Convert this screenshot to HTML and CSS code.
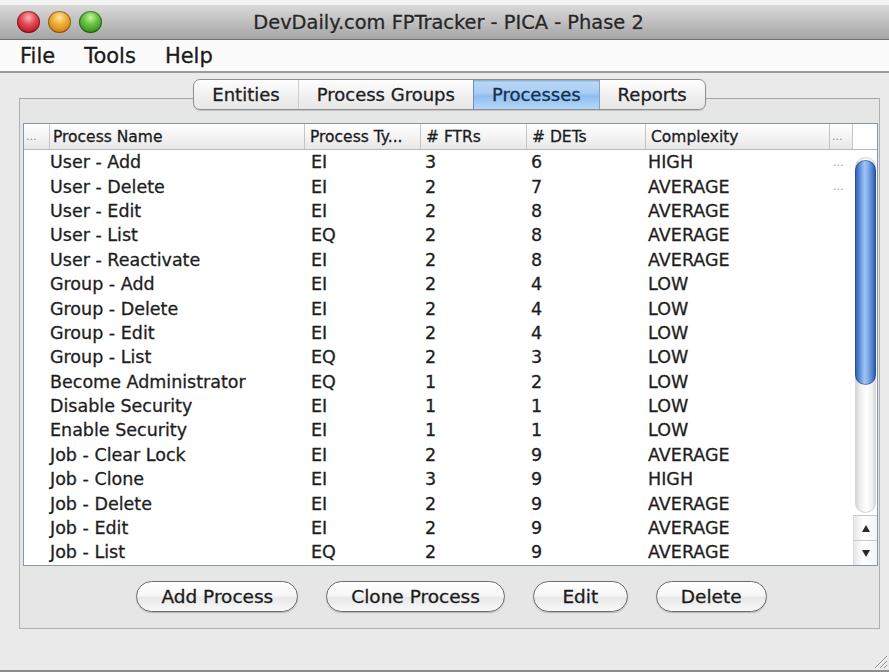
FILE: index.html
```html
<!DOCTYPE html>
<html lang="en">
<head>
<meta charset="utf-8">
<title>DevDaily.com FPTracker - PICA - Phase 2</title>
<link rel="stylesheet" href="styles.css">
</head>
<body>
<div class="window">
  <header class="titlebar">
    <div class="lights">
      <span class="light red"></span>
      <span class="light amber"></span>
      <span class="light green"></span>
    </div>
    <div class="title">DevDaily.com FPTracker - PICA - Phase 2</div>
  </header>

  <nav class="menubar">
    <span class="menu">File</span>
    <span class="menu">Tools</span>
    <span class="menu">Help</span>
  </nav>

  <main class="content">
    <div class="tabpane">
      <div class="tabs">
        <span class="tab">Entities</span>
        <span class="tab">Process Groups</span>
        <span class="tab active">Processes</span>
        <span class="tab">Reports</span>
      </div>

      <section class="panel">
        <div class="table">
          <div class="thead">
            <div class="th dots">...</div>
            <div class="th name">Process Name</div>
            <div class="th">Process Ty...</div>
            <div class="th"># FTRs</div>
            <div class="th"># DETs</div>
            <div class="th">Complexity</div>
            <div class="th dots">...</div>
            <div class="th corner"></div>
          </div>
          <div class="tbody">
            <div class="rows">
              <div class="row"><span></span><span class="c-name">User - Add</span><span class="c-type">EI</span><span class="c-num">3</span><span class="c-num">6</span><span class="c-cx">HIGH</span><span class="c-more">...</span></div>
              <div class="row"><span></span><span class="c-name">User - Delete</span><span class="c-type">EI</span><span class="c-num">2</span><span class="c-num">7</span><span class="c-cx">AVERAGE</span><span class="c-more">...</span></div>
              <div class="row"><span></span><span class="c-name">User - Edit</span><span class="c-type">EI</span><span class="c-num">2</span><span class="c-num">8</span><span class="c-cx">AVERAGE</span><span></span></div>
              <div class="row"><span></span><span class="c-name">User - List</span><span class="c-type">EQ</span><span class="c-num">2</span><span class="c-num">8</span><span class="c-cx">AVERAGE</span><span></span></div>
              <div class="row"><span></span><span class="c-name">User - Reactivate</span><span class="c-type">EI</span><span class="c-num">2</span><span class="c-num">8</span><span class="c-cx">AVERAGE</span><span></span></div>
              <div class="row"><span></span><span class="c-name">Group - Add</span><span class="c-type">EI</span><span class="c-num">2</span><span class="c-num">4</span><span class="c-cx">LOW</span><span></span></div>
              <div class="row"><span></span><span class="c-name">Group - Delete</span><span class="c-type">EI</span><span class="c-num">2</span><span class="c-num">4</span><span class="c-cx">LOW</span><span></span></div>
              <div class="row"><span></span><span class="c-name">Group - Edit</span><span class="c-type">EI</span><span class="c-num">2</span><span class="c-num">4</span><span class="c-cx">LOW</span><span></span></div>
              <div class="row"><span></span><span class="c-name">Group - List</span><span class="c-type">EQ</span><span class="c-num">2</span><span class="c-num">3</span><span class="c-cx">LOW</span><span></span></div>
              <div class="row"><span></span><span class="c-name">Become Administrator</span><span class="c-type">EQ</span><span class="c-num">1</span><span class="c-num">2</span><span class="c-cx">LOW</span><span></span></div>
              <div class="row"><span></span><span class="c-name">Disable Security</span><span class="c-type">EI</span><span class="c-num">1</span><span class="c-num">1</span><span class="c-cx">LOW</span><span></span></div>
              <div class="row"><span></span><span class="c-name">Enable Security</span><span class="c-type">EI</span><span class="c-num">1</span><span class="c-num">1</span><span class="c-cx">LOW</span><span></span></div>
              <div class="row"><span></span><span class="c-name">Job - Clear Lock</span><span class="c-type">EI</span><span class="c-num">2</span><span class="c-num">9</span><span class="c-cx">AVERAGE</span><span></span></div>
              <div class="row"><span></span><span class="c-name">Job - Clone</span><span class="c-type">EI</span><span class="c-num">3</span><span class="c-num">9</span><span class="c-cx">HIGH</span><span></span></div>
              <div class="row"><span></span><span class="c-name">Job - Delete</span><span class="c-type">EI</span><span class="c-num">2</span><span class="c-num">9</span><span class="c-cx">AVERAGE</span><span></span></div>
              <div class="row"><span></span><span class="c-name">Job - Edit</span><span class="c-type">EI</span><span class="c-num">2</span><span class="c-num">9</span><span class="c-cx">AVERAGE</span><span></span></div>
              <div class="row"><span></span><span class="c-name">Job - List</span><span class="c-type">EQ</span><span class="c-num">2</span><span class="c-num">9</span><span class="c-cx">AVERAGE</span><span></span></div>
            </div>
            <div class="scrollbar">
              <div class="track"><div class="thumb"></div></div>
              <div class="arrow up"><i></i></div>
              <div class="arrow down"><i></i></div>
            </div>
          </div>
        </div>

        <div class="buttons">
          <button class="btn">Add Process</button>
          <button class="btn">Clone Process</button>
          <button class="btn">Edit</button>
          <button class="btn">Delete</button>
        </div>
      </section>
    </div>
  </main>

  <svg class="grip" width="18" height="18" viewBox="0 0 18 18">
    <path d="M17 5 L5 17 M17 10 L10 17 M17 14 L14 17" stroke="#8c8c8c" stroke-width="1" fill="none"/>
    <path d="M17 6 L6 17 M17 11 L11 17 M17 15 L15 17" stroke="#fafafa" stroke-width="1" fill="none"/>
  </svg>
</div>
</body>
</html>
```

FILE: styles.css
```css
* { box-sizing: border-box; }

html, body {
  margin: 0;
  padding: 0;
  background: #f4f4f4;
}

body {
  font-family: "DejaVu Sans", "Noto Sans", sans-serif;
  color: #1f1f1f;
  -webkit-text-stroke: 0.3px currentColor;
}

.window {
  position: relative;
  width: 889px;
  height: 672px;
  display: flex;
  flex-direction: column;
  background: #e9e9e9;
  border-bottom: 2px solid #8d8d8d;
  overflow: hidden;
}

/* ---- title bar ---- */
.titlebar {
  position: relative;
  height: 40px;
  border-top: 5px solid #f3f3f3;
  background: linear-gradient(#dadada, #c2c2c2 45%, #a6a6a6);
  border-bottom: 1px solid #707070;
  display: flex;
  align-items: center;
  justify-content: center;
}

.lights {
  position: absolute;
  left: 17px;
  top: 6px;
  display: flex;
  gap: 8px;
}

.light {
  width: 23px;
  height: 22px;
  border-radius: 50%;
  box-shadow: inset 0 0 0 1px rgba(0, 0, 0, 0.35);
  -webkit-text-stroke: 0;
}

.light.red {
  background: radial-gradient(circle at 50% 30%, #ffb6b6 0, #e4525a 35%, #b8121e 80%, #8c0c14 100%);
}

.light.amber {
  background: radial-gradient(circle at 50% 30%, #ffe6a8 0, #f0b23a 35%, #cf7c10 80%, #a25c08 100%);
}

.light.green {
  background: radial-gradient(circle at 50% 30%, #c8f3a8 0, #6cc846 35%, #2f8a1c 80%, #1f6410 100%);
}

.title {
  font-size: 19.4px;
  color: #262626;
  padding-left: 8px;
  text-shadow: 0 1px 0 rgba(255, 255, 255, 0.35);
}

/* ---- menu bar ---- */
.menubar {
  height: 33px;
  background: #fbfbfb;
  border-bottom: 2px solid #9c9c9c;
  display: flex;
  align-items: center;
  padding: 0 0 0 20px;
  gap: 29px;
}

.menu {
  font-size: 21px;
  color: #1a1a1a;
}

/* ---- content + tabs ---- */
.content {
  flex: 1;
  padding: 6px 9px 0 19px;
  background: #eaeaea;
}

.tabpane {
  display: flex;
  flex-direction: column;
}

.tabs {
  position: relative;
  z-index: 1;
  align-self: center;
  display: flex;
  height: 31px;
  margin-bottom: -12px;
  border: 1px solid #8e8e8e;
  border-radius: 7px;
  overflow: hidden;
  background: linear-gradient(#fefefe, #f1f1f1 50%, #e6e6e6);
  box-shadow: 0 1px 1px rgba(0, 0, 0, 0.15);
}

.tab {
  display: flex;
  align-items: center;
  padding: 0 18px;
  font-size: 18px;
  color: #202020;
}

.tab + .tab { border-left: 1px solid #cdcdcd; }

.tab.active {
  color: #14304f;
  border-left-color: #6f8fb6;
  background: linear-gradient(#7fa6d4 0, #b9d7f6 8%, #a9cdf3 45%, #8fbeef 55%, #b6d7f8 100%);
}

.tab.active + .tab { border-left-color: #8aa2c0; }

.panel {
  border: 1px solid #b0b0b0;
  border-top-color: #a4a4a4;
  background: #e6e6e6;
  padding: 24px 1px 16px 3px;
}

/* ---- table ---- */
.table {
  border: 1px solid #8495ad;
  background: #ffffff;
}

.thead {
  display: grid;
  grid-template-columns: 26px 255px 116px 106px 119px 184px 23px 24px;
  height: 26px;
  background: linear-gradient(#ffffff, #f4f4f4 50%, #e7e7e7);
  border-bottom: 1px solid #b9b9b9;
}

.th {
  display: flex;
  align-items: center;
  padding-left: 5px;
  font-size: 15.5px;
  color: #1c1c1c;
  white-space: nowrap;
  overflow: hidden;
  border-right: 1px solid #c4c4c4;
}

.th.name { padding-left: 3px; }

.th.dots {
  padding-left: 2px;
  font-size: 11px;
  color: #888;
  -webkit-text-stroke: 0;
}

.th.corner {
  border-right: 0;
  background: #ffffff;
}

.tbody {
  display: flex;
  height: 415px;
}

.rows {
  flex: 1;
}

.row {
  display: grid;
  grid-template-columns: 26px 255px 116px 106px 119px 184px 23px;
  height: 24.4px;
  align-items: center;
  font-size: 17.5px;
  color: #1e1e1e;
  white-space: nowrap;
}

.c-name { padding-left: 0; }
.c-type { padding-left: 6px; }
.c-num  { padding-left: 4px; }
.c-cx   { padding-left: 2px; }

.c-more {
  padding-left: 3px;
  font-size: 11px;
  color: #9a9a9a;
  -webkit-text-stroke: 0;
}

/* ---- scroll bar ---- */
.scrollbar {
  width: 24px;
  display: flex;
  flex-direction: column;
  background: #ffffff;
}

.track {
  flex: 1;
  margin: 7px 1px 2px 2px;
  border-radius: 11px;
  background: linear-gradient(to right, #cfcfcf, #efefef 25%, #ffffff 55%, #f1f1f1 80%, #d4d4d4);
  box-shadow: inset 0 0 0 1px #d8d8d8;
  padding: 3px 0 0;
}

.thumb {
  height: 225px;
  border-radius: 11px;
  background: linear-gradient(to right, #2a58ab, #4f84d2 18%, #9fc4f3 45%, #86b2ec 60%, #4e80cc 82%, #2753a3);
  box-shadow: inset 0 0 0 1px rgba(30, 60, 120, 0.45);
}

.arrow {
  height: 25px;
  display: flex;
  align-items: center;
  justify-content: center;
  background: linear-gradient(to right, #e6e6e6, #ffffff 40%, #f4f4f4);
  border-left: 1px solid #dadada;
  border-top: 1px solid #c9c9c9;
}

.arrow i {
  width: 0;
  height: 0;
  border-left: 4px solid transparent;
  border-right: 4px solid transparent;
}

.arrow.up i { border-bottom: 7px solid #2a2a2a; }
.arrow.down i { border-top: 7px solid #2a2a2a; }

/* ---- buttons ---- */
.buttons {
  display: flex;
  justify-content: center;
  gap: 28px;
  margin-top: 15px;
  padding-left: 2px;
}

.btn {
  height: 31px;
  min-width: 95px;
  padding: 0 24px;
  font-family: "DejaVu Sans", "Noto Sans", sans-serif;
  font-size: 18.5px;
  color: #1c1c1c;
  -webkit-text-stroke: 0.3px currentColor;
  border: 1px solid #6c6c6c;
  border-radius: 16px;
  background: linear-gradient(#ffffff, #f7f7f7 45%, #e8e8e8 55%, #f9f9f9);
  box-shadow: 0 1px 1px rgba(0, 0, 0, 0.2);
}

/* ---- resize grip in the corner ---- */
.grip {
  position: absolute;
  right: 1px;
  bottom: 1px;
}
```
